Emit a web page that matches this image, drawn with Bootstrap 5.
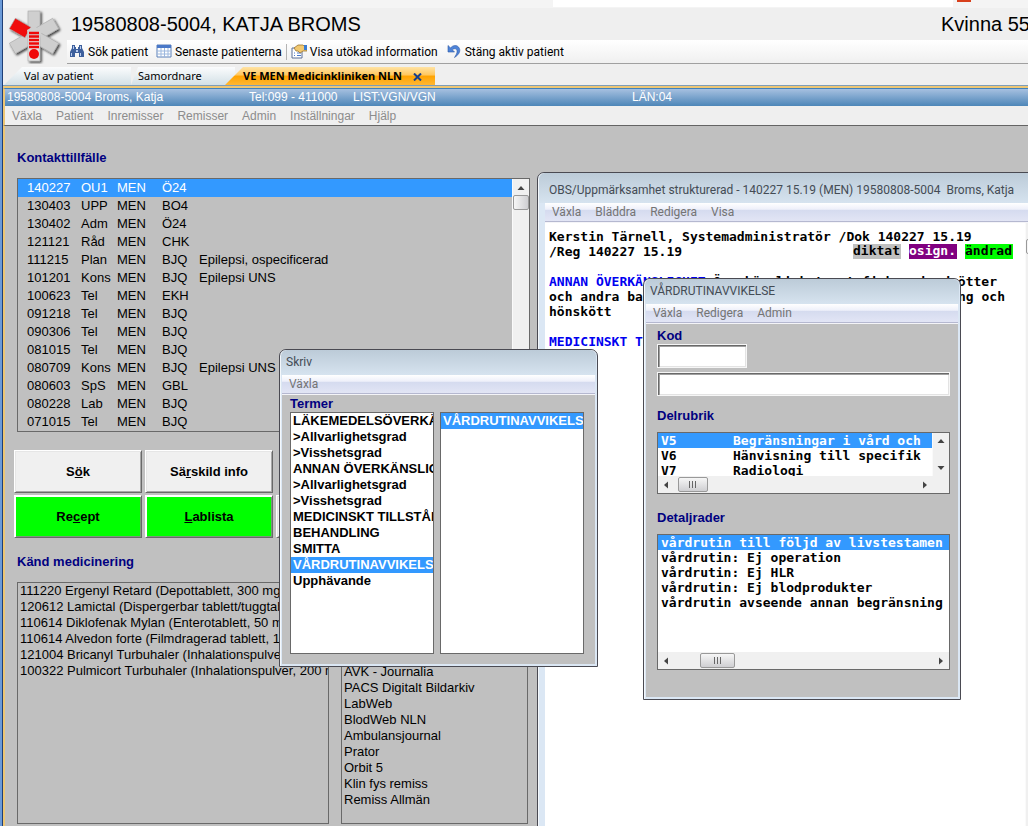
<!DOCTYPE html>
<html lang="sv">
<head>
<meta charset="utf-8">
<meta name="viewport" content="width=device-width, initial-scale=1">
<title>Journal – Katja Broms</title>
<link href="https://cdn.jsdelivr.net/npm/bootstrap@5.3.0/dist/css/bootstrap.min.css" rel="stylesheet">
<style>
:root { --navy:#000080; --sel:#3399ff; --face:#c0c0c0; --line:#696969; }
body { font:13px/16px "Liberation Sans", Arial, sans-serif; color:#000; background:#efefef; }
button, input { font:inherit; color:inherit; }
ul { list-style:none; margin:0; padding:0; }
.ui-font { font-family:Roboto, sans-serif; font-size:12px; }
.shell { border-left:2px solid #6c9bd8; box-shadow:inset 1px 0 #1f3f77; padding-left:1px; }

/* header */
.topstrip { height:8px; background:#f4f4f4; }
.topstrip .blank { background:#fff; width:400px; height:7px; margin-left:550px; }
.topstrip .chip { width:14px; height:2px; background:#d8401c; margin-left:4px; }
.patient { height:32px; font-size:20px; line-height:32px; padding-left:68px; margin-right:-6px; }
.tools { height:24px; margin-left:64px; background:linear-gradient(#fff,#f0f0f0); border-bottom:1px solid #a0a0a0; padding-left:2px; }
.tools button, .menubar button, .tabs button { border:0; background:none; padding:0; white-space:nowrap; }
.tools svg { width:16px; height:16px; margin-right:3px; vertical-align:-3px; }
.tools .sep { width:1px; height:16px; background:#b4b4b4; }
.logo { position:absolute; left:5px; top:8px; width:56px; height:56px; }
.tabs { height:21px; padding:3px 0 0 1px; font-family:"Noto Sans", sans-serif; }
.tabs button { height:18px; line-height:18px; background:linear-gradient(#fbfcfd,#d3e0e6); text-align:left; font-size:11px; clip-path:polygon(18px 0,100% 0,100% 100%,0 100%); }
.tabs .t1 { width:127px; padding-left:20px; }
.tabs .t2 { width:104px; padding-left:7px; clip-path:polygon(7px 0,100% 0,100% 100%,0 100%); }
.tabs .t3 { width:210px; padding-left:18px; margin-left:-10px; font-weight:700; background:linear-gradient(#ffe3a4,#ffc65c 45%,#ffa300 50%,#ffb733); }
.infobar { border-top:1px solid #7d9db9; }
.infobar .in { border-top:2px solid #edc674; }
.infobar .blue { height:18px; line-height:17px; font-size:12px; color:#fff; border-top:1px solid #3f82bb; background:linear-gradient(#a6c0e0,#4d86b8); border-left:2px solid #edc674; padding-left:2px; }
.infobar .blue span { flex:0 0 auto; white-space:nowrap; }
.menubar button { color:#8c8c8c; }
.main-menu { height:20px; border-bottom:1px solid #646464; border-left:2px solid #edc674; padding-left:7px; gap:14px; font-size:12px; }

/* workspace */
.workspace { background:var(--face); border-left:2px solid #edc674; min-height:0; }
.desk { width:523px; padding:24px 0 2px 12px; }
h2 { font-size:13px; line-height:16px; font-weight:700; color:var(--navy); margin:0; }
.sunk { border:1px solid var(--line); overflow:hidden; }
.contacts-box { margin:12px -2px 18px 0; }
.contacts { width:100%; table-layout:fixed; }
.contacts td { height:18px; padding:0; line-height:18px; white-space:nowrap; }
.contacts td:first-child { padding-left:9px; }
.picked { background:var(--sel); color:#fff; }
.vbar { width:17px; background:#f0f0f0; border-left:1px solid #fafafa; }
.vbar svg, .hbar svg { width:16px; height:16px; display:block; fill:#444; }
.thumb { border:1px solid #999; border-radius:2px; background:linear-gradient(90deg,#f6f6f6,#cfcfd2); }
.vbar .thumb { height:15px; }
.keys { display:grid; grid-template-columns:128px 128px 128px; gap:2px 3px; margin-left:-3px; }
.key { height:43px; border:1px solid; border-color:#fff #696969 #696969 #fff; box-shadow:inset 1px 1px #e6e6e6, inset -1px -1px #a8a8a8; background:#f0f0f0; font-weight:700; padding:0; border-radius:0; }
.key.go { background:#0f0; grid-row:2; box-shadow:inset 1px 1px #fff, inset -1px -1px #7a9a7a; }
.key.blank-key { grid-column:3; grid-row:2; }
.rows li { line-height:16px; padding-left:2px; white-space:nowrap; }
.rows li a { color:inherit; text-decoration:none; }
.meds { width:312px; }
.links { width:187px; padding-bottom:15px; }

/* floating windows */
.win { position:absolute; border:1px solid #4a4a52; border-radius:7px 7px 0 0; background:#dbe7f4; padding:0 2px 2px; box-shadow:inset 1px 1px #f4f8fc; display:flex; flex-direction:column; }
.win-title { height:25px; line-height:25px; padding-left:5px; color:#444c55; background:linear-gradient(#bccbd8,#d6e3ef); border-radius:6px 6px 0 0; margin:0 -1px; white-space:nowrap; }
.win .menubar { height:19px; gap:14px; padding-left:7px; background:linear-gradient(#fff 0,#eef0fa 35%,#d5dbef 40%,#e2e5f5); border-bottom:1px solid #b5b8d0; }
.win .menubar button { color:#747474; }
.win-body { background:var(--face); border-top:1px solid #f4f4f8; flex:1 1 auto; min-height:0; }
.win-obs { left:532px; right:-22px; top:46px; bottom:-10px; padding:0 7px; }
.win-obs .win-title { margin:0 -6px; padding:5px 0 0 10px; height:30px; }
.win-obs .win-body { background:#fff; }
.win-skriv { left:274px; top:223px; width:319px; height:318px; }
.win-vard { left:638px; top:152px; width:318px; height:422px; }
.mono { font:bold 13px/15px "DejaVu Sans Mono", monospace; white-space:nowrap; }
.note { padding:6px 12px 0 4px; }
.note > div { min-height:15px; }
.term { color:#0000f0; }
.flag { width:48px; line-height:14px; overflow:hidden; }
.skriv-body { padding:1px 11px 10px 8px; }
.termbox { background:#fff; width:144px; font-weight:700; }
.vard-body { padding:4px 8px 27px 11px; }
.field { display:block; flex:0 0 24px; border:1px solid #f6f6f6; box-shadow:inset 1px 1px #696969, inset 2px 2px #a0a0a0, inset -1px -1px #e3e3e3; background:#fff; border-radius:0; padding:2px 4px; }
.kod { width:90px; }
.opts li { padding-left:3px; height:15px; }
.code { display:inline-block; width:72px; }
.code-list { height:43px; }
.hbar { height:17px; flex:0 0 17px; background:#f0f0f0; }
.hbar .thumb { height:15px; background:linear-gradient(#f6f6f6,#cfcfd2); }
.grip { width:8px; height:7px; background:repeating-linear-gradient(90deg,#666 0 1px,transparent 1px 3px); }
</style>
</head>
<body class="vh-100 overflow-hidden">
<div class="shell d-flex flex-column h-100 position-relative overflow-hidden">
  <div class="topstrip d-flex overflow-hidden flex-shrink-0"><div class="blank flex-shrink-0"></div><div class="chip flex-shrink-0"></div></div>
  <header>
    <svg class="logo" viewBox="0 0 56 56" aria-hidden="true">
      <defs><filter id="sh" x="-20%" y="-20%" width="150%" height="150%"><feDropShadow dx="1.5" dy="1.5" stdDeviation="1" flood-color="#000" flood-opacity=".75"/></filter></defs>
      <g filter="url(#sh)" stroke="#a9a9a9" stroke-width=".6">
        <g fill="#cfcfcf">
          <rect x="21" y="3" width="12" height="25"/>
          <rect x="21" y="3" width="12" height="25" transform="rotate(60 27 28)"/>
          <rect x="21" y="3" width="12" height="25" transform="rotate(120 27 28)"/>
          <rect x="21" y="3" width="12" height="25" transform="rotate(240 27 28)"/>
        </g>
        <rect x="21" y="3" width="12" height="18" fill="#f00808" transform="rotate(300 27 28)"/>
        <path d="M21 24.500h12V53H21z" fill="#e4e4e4"/>
      </g>
      <path d="M20 22l7-4 8 5-2 7H21z" fill="#cfcfcf"/>
      <path d="M22 25h10M22 28.500h10M22 32h10M22 35.500h10M22 39h10" stroke="#f00808" stroke-width="2.300"/>
      <circle cx="27" cy="46" r="5" fill="#f00808"/>
    </svg>
    <div class="patient d-flex text-nowrap"><span class="flex-grow-1">19580808-5004, KATJA BROMS</span><span class="pe-1">Kvinna 55</span></div>
    <div class="tools ui-font d-flex align-items-center" role="toolbar">
      <button><svg viewBox="0 0 16 16"><path d="M3 2h3v2h1v2h2V4h1V2h3v3l2 4v5h-5v-4H6v4H1V9l2-4z" fill="#3d5f9c"/><path d="M4 3h1v3H4zM11 3h1v3h-1zM2 10h1v3H2zM11 10h1v3h-1zM7 7h2v2H7z" fill="#b9cdf0"/></svg>Sök patient</button>
      <button class="ms-2"><svg viewBox="0 0 16 16"><path d="M1 2h14v12H1z" fill="#fff" stroke="#5d80b8"/><path d="M1 2h14v3H1z" fill="#4a78c8"/><path d="M5 5v9M8.500 5v9M12 5v9M1 8h14M1 11h14" stroke="#9db8de"/></svg>Senaste patienterna</button>
      <span class="sep mx-1"></span>
      <button><svg viewBox="0 0 16 16"><path d="M1 5h10v10H1z" fill="#fff" stroke="#5a6f96"/><path d="M3 10h1m2 0h4M3 12.500h1m2 0h4" stroke="#4a78c8"/><path d="M3 5l4-3h5l1 1h3v5h-4l-3 2-2-2H5z" fill="#f1c870" stroke="#9b7430" stroke-width=".8"/><path d="M13 2h3v5h-3z" fill="#3a7bd0"/></svg>Visa utökad information</button>
      <button class="ms-2"><svg viewBox="0 0 16 16"><path d="M2 2.500v6.500h6.500L6.300 6.800C9 4.500 12.500 6 10.500 11L8.500 14.500C14 11 15 7 12.500 4 10 1.500 6.500 2.500 4.500 4.900z" fill="#4d83d8" stroke="#2d57a5" stroke-width=".6"/></svg>Stäng aktiv patient</button>
    </div>
    <div class="tabs d-flex" role="tablist">
      <button class="t1" role="tab">Val av patient</button>
      <button class="t2" role="tab">Samordnare</button>
      <button class="t3" role="tab" aria-selected="true">VE MEN Medicinkliniken NLN <svg class="ms-2" width="9" height="8" viewBox="0 0 9 8"><path d="M1 .5l7 7M8 .5l-7 7" stroke="#153e8c" stroke-width="2"/></svg></button>
    </div>
    <div class="infobar"><div class="in"><div class="blue d-flex">
      <span style="width:242px">19580808-5004 Broms, Katja</span><span style="width:104px">Tel:099 - 411000</span><span style="width:279px">LIST:VGN/VGN</span><span>LÄN:04</span>
    </div></div></div>
    <nav class="menubar main-menu d-flex"><button>Växla</button><button>Patient</button><button>Inremisser</button><button>Remisser</button><button>Admin</button><button>Inställningar</button><button>Hjälp</button></nav>
  </header>

  <main class="workspace flex-grow-1 position-relative overflow-hidden">
    <section class="desk d-flex flex-column h-100">
      <h2>Kontakttillfälle</h2>
      <div class="sunk contacts-box d-flex flex-shrink-0">
        <table class="contacts">
          <colgroup><col style="width:63px"><col style="width:36px"><col style="width:45px"><col style="width:37px"><col></colgroup>
          <tbody>
          <tr class="picked"><td>140227</td><td>OU1</td><td>MEN</td><td>Ö24</td><td></td></tr>
          <tr><td>130403</td><td>UPP</td><td>MEN</td><td>BO4</td><td></td></tr>
          <tr><td>130402</td><td>Adm</td><td>MEN</td><td>Ö24</td><td></td></tr>
          <tr><td>121121</td><td>Råd</td><td>MEN</td><td>CHK</td><td></td></tr>
          <tr><td>111215</td><td>Plan</td><td>MEN</td><td>BJQ</td><td>Epilepsi, ospecificerad</td></tr>
          <tr><td>101201</td><td>Kons</td><td>MEN</td><td>BJQ</td><td>Epilepsi UNS</td></tr>
          <tr><td>100623</td><td>Tel</td><td>MEN</td><td>EKH</td><td></td></tr>
          <tr><td>091218</td><td>Tel</td><td>MEN</td><td>BJQ</td><td></td></tr>
          <tr><td>090306</td><td>Tel</td><td>MEN</td><td>BJQ</td><td></td></tr>
          <tr><td>081015</td><td>Tel</td><td>MEN</td><td>BJQ</td><td></td></tr>
          <tr><td>080709</td><td>Kons</td><td>MEN</td><td>BJQ</td><td>Epilepsi UNS</td></tr>
          <tr><td>080603</td><td>SpS</td><td>MEN</td><td>GBL</td><td></td></tr>
          <tr><td>080228</td><td>Lab</td><td>MEN</td><td>BJQ</td><td></td></tr>
          <tr><td>071015</td><td>Tel</td><td>MEN</td><td>BJQ</td><td></td></tr>
          </tbody>
        </table>
        <div class="vbar flex-shrink-0"><svg viewBox="0 0 16 16"><path d="M4.500 11L8 7l3.500 4z"/></svg><div class="thumb"></div></div>
      </div>
      <div class="keys">
        <button class="key">S<u>ö</u>k</button>
        <button class="key">Sä<u>r</u>skild info</button>
        <button class="key go">Re<u>c</u>ept</button>
        <button class="key go"><u>L</u>ablista</button>
        <button class="key blank-key" aria-label="Fler funktioner"></button>
      </div>
      <h2 class="mt-3">Känd medicinering</h2>
      <div class="d-flex justify-content-between flex-grow-1 mt-2 pt-1">
        <ul class="sunk rows meds">
          <li>111220 Ergenyl Retard (Depottablett, 300 mg)</li>
          <li>120612 Lamictal (Dispergerbar tablett/tuggtablett)</li>
          <li>110614 Diklofenak Mylan (Enterotablett, 50 mg)</li>
          <li>110614 Alvedon forte (Filmdragerad tablett, 1 g)</li>
          <li>121004 Bricanyl Turbuhaler (Inhalationspulver)</li>
          <li>100322 Pulmicort Turbuhaler (Inhalationspulver, 200 mikrog)</li>
        </ul>
        <ul class="sunk rows links d-flex flex-column justify-content-end">
          <li><a href="#">AVK - Journalia</a></li>
          <li><a href="#">PACS Digitalt Bildarkiv</a></li>
          <li><a href="#">LabWeb</a></li>
          <li><a href="#">BlodWeb NLN</a></li>
          <li><a href="#">Ambulansjournal</a></li>
          <li><a href="#">Prator</a></li>
          <li><a href="#">Orbit 5</a></li>
          <li><a href="#">Klin fys remiss</a></li>
          <li><a href="#">Remiss Allmän</a></li>
        </ul>
      </div>
    </section>

    <section class="win win-obs">
      <div class="win-title ui-font">OBS/Uppmärksamhet strukturerad - 140227 15.19 (MEN) 19580808-5004 &nbsp;Broms, Katja</div>
      <nav class="menubar ui-font d-flex"><button>Växla</button><button>Bläddra</button><button>Redigera</button><button>Visa</button></nav>
      <div class="win-body d-flex">
        <div class="note mono flex-grow-1">
          <div>Kerstin Tärnell, Systemadministratör /Dok 140227 15.19</div>
          <div class="d-flex justify-content-between"><span>/Reg 140227 15.19</span><span class="d-flex gap-2"><span class="flag" style="background:#c0c0c0">diktat</span><span class="flag text-white" style="background:#800080">osign.</span><span class="flag" style="background:#0f0">ändrad</span></span></div>
          <div></div>
          <div class="d-flex justify-content-between pe-3"><span><span class="term">ANNAN ÖVERKÄNSLIGHET</span> Överkänslighet mot fisk,</span><span>jordnötter</span></div>
          <div class="d-flex justify-content-between pe-2"><span>och andra baljväxter samt råa ägg från höns,</span><span>kyckling och</span></div>
          <div>hönskött</div>
          <div></div>
          <div class="term">MEDICINSKT TILLSTÅND</div>
        </div>
        <div class="vbar flex-shrink-0"><svg viewBox="0 0 16 16"><path d="M4.500 11L8 7l3.500 4z"/></svg><div class="thumb"></div></div>
      </div>
    </section>

    <section class="win win-vard">
      <div class="win-title ui-font">VÅRDRUTINAVVIKELSE</div>
      <nav class="menubar ui-font d-flex"><button>Växla</button><button>Redigera</button><button>Admin</button></nav>
      <div class="win-body vard-body d-flex flex-column">
        <h2><label class="d-block" for="kod">Kod</label></h2>
        <input id="kod" class="field kod" type="text">
        <input class="field w-100 mt-1" type="text" aria-label="Beskrivning">
        <h2 class="mt-2 mb-2 pt-1">Delrubrik</h2>
        <div class="sunk flex-shrink-0">
          <div class="code-list d-flex bg-white">
            <ul class="opts mono flex-grow-1 overflow-hidden" role="listbox">
              <li class="picked"><span class="code">V5</span>Begränsningar i vård och</li>
              <li><span class="code">V6</span>Hänvisning till specifik</li>
              <li><span class="code">V7</span>Radiologi</li>
            </ul>
            <div class="vbar flex-shrink-0 d-flex flex-column justify-content-between"><svg viewBox="0 0 16 16"><path d="M4.500 10L8 6l3.500 4z"/></svg><svg viewBox="0 0 16 16"><path d="M4.500 6L8 10l3.500-4z"/></svg></div>
          </div>
          <div class="hbar d-flex align-items-center pe-3"><svg viewBox="0 0 16 16"><path d="M10 4.500L6 8l4 3.500z"/></svg><div class="thumb d-flex align-items-center justify-content-center ms-1" style="width:30px"><span class="grip"></span></div><svg class="ms-auto" viewBox="0 0 16 16"><path d="M6 4.500L10 8l-4 3.500z"/></svg></div>
        </div>
        <h2 class="mt-3">Detaljrader</h2>
        <div class="sunk bg-white mt-2 flex-grow-1 d-flex flex-column">
          <ul class="opts mono flex-grow-1" role="listbox">
            <li class="picked">vårdrutin till följd av livstestamen</li>
            <li>vårdrutin: Ej operation</li>
            <li>vårdrutin: Ej HLR</li>
            <li>vårdrutin: Ej blodprodukter</li>
            <li>vårdrutin avseende annan begränsning</li>
          </ul>
          <div class="hbar d-flex align-items-center"><svg viewBox="0 0 16 16"><path d="M10 4.500L6 8l4 3.500z"/></svg><div class="thumb d-flex align-items-center justify-content-center" style="width:35px;margin-left:26px"><span class="grip"></span></div><svg class="ms-auto" viewBox="0 0 16 16"><path d="M6 4.500L10 8l-4 3.500z"/></svg></div>
        </div>
      </div>
    </section>

    <section class="win win-skriv">
      <div class="win-title ui-font">Skriv</div>
      <nav class="menubar ui-font d-flex"><button>Växla</button></nav>
      <div class="win-body skriv-body d-flex flex-column">
        <h2>Termer</h2>
        <div class="d-flex justify-content-between flex-grow-1">
          <ul class="sunk rows termbox" role="listbox">
            <li>LÄKEMEDELSÖVERKÄNSLIGHET</li><li>&gt;Allvarlighetsgrad</li><li>&gt;Visshetsgrad</li>
            <li>ANNAN ÖVERKÄNSLIGHET</li><li>&gt;Allvarlighetsgrad</li><li>&gt;Visshetsgrad</li>
            <li>MEDICINSKT TILLSTÅND</li><li>BEHANDLING</li><li>SMITTA</li>
            <li class="picked">VÅRDRUTINAVVIKELSE</li><li>Upphävande</li>
          </ul>
          <ul class="sunk rows termbox" role="listbox"><li class="picked">VÅRDRUTINAVVIKELSE</li></ul>
        </div>
      </div>
    </section>
  </main>
</div>
<script src="https://cdn.jsdelivr.net/npm/bootstrap@5.3.0/dist/js/bootstrap.bundle.min.js"></script>
</body>
</html>
